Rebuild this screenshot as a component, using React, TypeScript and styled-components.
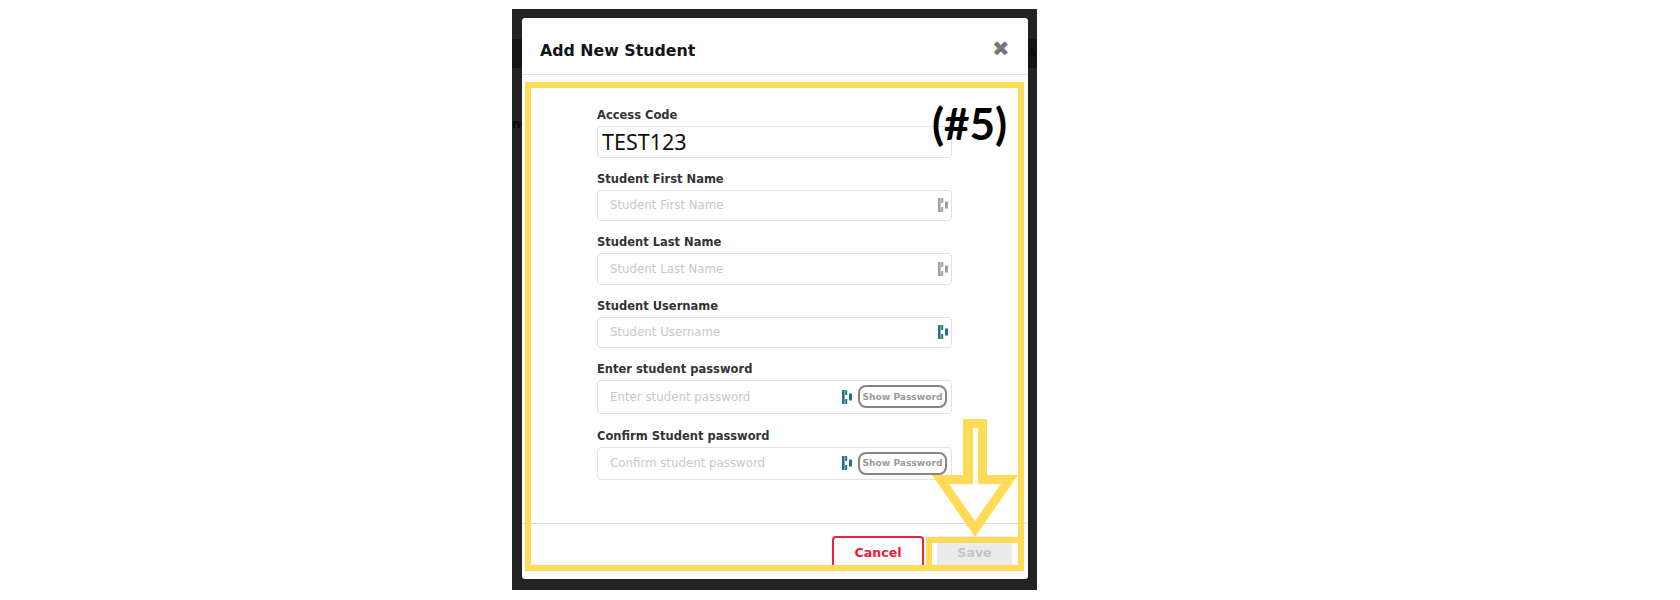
import React from "react";
import styled, { createGlobalStyle } from "styled-components";

const Global = createGlobalStyle`
  html, body { margin: 0; padding: 0; background: #fff; }
  body { font-family: "DejaVu Sans", Verdana, sans-serif; }
`;

const Page = styled.div`
  width: 1680px;
  height: 600px;
  padding: 9px 0 0 512px;
  box-sizing: border-box;
  overflow: hidden;
`;

const Backdrop = styled.div`
  position: relative;
  width: 525px;
  height: 581px;
  box-sizing: border-box;
  padding: 9px 9.5px 0 10px;
  background: #232323;
  overflow: hidden;
`;

const Band = styled.div`
  position: absolute;
  left: 0;
  right: 0;
  top: 30px;
  height: 29px;
  background: #151515;
`;

const Ghost = styled.span<{ $left: number; $top: number }>`
  position: absolute;
  left: ${(p) => p.$left}px;
  top: ${(p) => p.$top}px;
  font-size: 12px;
  font-weight: 700;
  color: #0c0c0c;
`;

const Modal = styled.div`
  position: relative;
  height: 561px;
  background: #fff;
  border-radius: 3px;
  display: flex;
  flex-direction: column;
`;

const Header = styled.header`
  height: 57px;
  padding: 8px 18px 0;
  box-sizing: border-box;
  border-bottom: 1px solid #e3e3e3;
  display: flex;
  align-items: center;
  justify-content: space-between;
`;

const Title = styled.h2`
  margin: 0;
  font-size: 15.8px;
  font-weight: 700;
  color: #151515;
`;

const Close = styled.span`
  font-size: 21px;
  font-weight: 700;
  color: #777;
  line-height: 1;
  margin: -2px 0 0;
`;

const Body = styled.div`
  flex: 1;
  padding: 32px 0 0 75px;
  display: flex;
  flex-direction: column;
`;

const Field = styled.div<{ $tall?: boolean }>`
  width: 355px;
  margin-bottom: ${(p) => (p.$tall ? 14 : 13)}px;
`;

const Label = styled.label`
  display: block;
  height: 17px;
  line-height: 17px;
  margin-bottom: 2px;
  font-size: 11.5px;
  font-weight: 700;
  color: #333;
`;

const InputBox = styled.div<{ $tall?: boolean }>`
  height: ${(p) => (p.$tall ? 33.5 : 31.5)}px;
  box-sizing: border-box;
  border: 1px solid #e2e2e2;
  border-radius: 4px;
  display: flex;
  align-items: center;
  padding: 0 ${(p) => (p.$tall ? 4 : 3)}px 0 12px;
  gap: 6px;
`;

const Value = styled.span`
  flex: 1;
  margin-left: -8px;
  font-family: "Noto Sans", sans-serif;
  font-size: 21.5px;
  color: #111;
`;

const Placeholder = styled.span`
  flex: 1;
  font-size: 11.8px;
  color: #c8c8c8;
`;

const ShowButton = styled.span`
  width: 89px;
  height: 23px;
  box-sizing: border-box;
  border: 2px solid #858585;
  border-radius: 8px;
  display: flex;
  align-items: center;
  justify-content: center;
  font-size: 9.1px;
  font-weight: 700;
  color: #9a9a9a;
  white-space: nowrap;
`;

const Footer = styled.footer`
  height: 56px;
  box-sizing: border-box;
  border-top: 1px solid #dcdcdc;
  display: flex;
  justify-content: flex-end;
  align-items: flex-start;
  gap: 13px;
  padding: 12px 15.5px 0 0;
`;

const CancelButton = styled.span`
  width: 92px;
  height: 32px;
  box-sizing: border-box;
  border: 2px solid #e9223f;
  border-radius: 4px;
  display: flex;
  align-items: center;
  justify-content: center;
  font-size: 12.6px;
  font-weight: 700;
  color: #f0183c;
`;

const SaveButton = styled.span`
  width: 75px;
  height: 32px;
  background: #ebebeb;
  display: flex;
  align-items: center;
  justify-content: center;
  font-size: 12.6px;
  font-weight: 700;
  color: #c4c4c4;
`;

const Frame = styled.div`
  position: absolute;
  left: 3px;
  top: 64px;
  width: 499px;
  height: 489px;
  box-sizing: border-box;
  border: 6px solid #ffdb58;
  pointer-events: none;
`;

const SaveFrame = styled.div`
  position: absolute;
  left: 404px;
  top: 519px;
  width: 98px;
  height: 34px;
  box-sizing: border-box;
  border: 6px solid #ffdb58;
  pointer-events: none;
`;

const Step = styled.span`
  position: absolute;
  left: 410px;
  top: 79px;
  font-family: Lato, sans-serif;
  font-size: 44px;
  line-height: 52px;
  font-weight: 700;
  color: #000;
`;

const ArrowSvg = styled.svg`
  position: absolute;
  left: 410px;
  top: 401px;
`;

const FieldIcon = ({ color }: { color: string }) => (
  <svg width="10" height="14" viewBox="0 0 10 14" fill={color}>
    <rect x="0" y="0" width="2.6" height="14" />
    <rect x="3.2" y="0" width="2" height="5" />
    <rect x="3.2" y="9" width="2" height="5" />
    <rect x="7" y="3.5" width="3" height="7" />
  </svg>
);

const fields = [
  { label: "Student First Name", ph: "Student First Name", icon: "#a0a0a0" },
  { label: "Student Last Name", ph: "Student Last Name", icon: "#a0a0a0" },
  { label: "Student Username", ph: "Student Username", icon: "#1c7484" },
  { label: "Enter student password", ph: "Enter student password", icon: "#1c7484", pw: true },
  { label: "Confirm Student password", ph: "Confirm student password", icon: "#1c7484", pw: true },
];

export default function App() {
  return (
    <Page>
      <Global />
      <Backdrop>
        <Band />
        <Ghost $left={0} $top={108}>ne</Ghost>
        <Ghost $left={515} $top={37}>A</Ghost>
        <Modal>
          <Header>
            <Title>Add New Student</Title>
            <Close>✖</Close>
          </Header>
          <Body>
            <Field>
              <Label>Access Code</Label>
              <InputBox>
                <Value>TEST123</Value>
              </InputBox>
            </Field>
            {fields.map((f) => (
              <Field key={f.label} $tall={f.pw}>
                <Label>{f.label}</Label>
                <InputBox $tall={f.pw}>
                  <Placeholder>{f.ph}</Placeholder>
                  <FieldIcon color={f.icon} />
                  {f.pw && <ShowButton>Show Password</ShowButton>}
                </InputBox>
              </Field>
            ))}
          </Body>
          <Footer>
            <CancelButton>Cancel</CancelButton>
            <SaveButton>Save</SaveButton>
          </Footer>
          <Frame />
          <SaveFrame />
          <Step>(#5)</Step>
          <ArrowSvg width="86" height="118" viewBox="0 0 86 118">
            <path
              fillRule="evenodd"
              fill="#ffdb58"
              d="M31 0 H55 V56 H86 L43 118 L0 56 H31 Z M41 9 V65 H17 L43 102 L69 65 H46 V9 Z"
            />
          </ArrowSvg>
        </Modal>
      </Backdrop>
    </Page>
  );
}
